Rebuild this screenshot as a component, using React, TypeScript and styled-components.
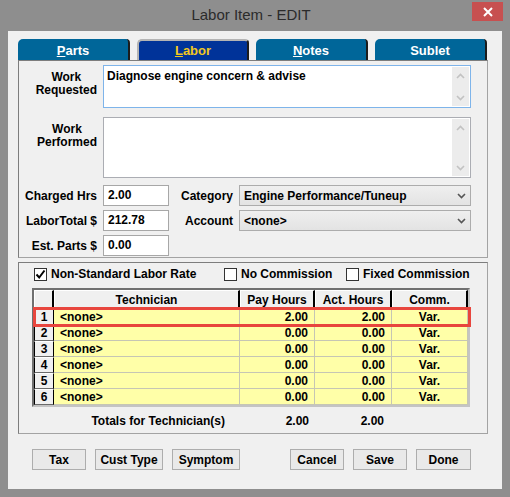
import React from 'react';
import styled, {createGlobalStyle} from 'styled-components';

const GlobalStyle = createGlobalStyle`
  body {
    margin: 0;
    font-family: "Liberation Sans", Arial, sans-serif;
  }
  * { box-sizing: border-box; }
`;

const Window = styled.div`
  width: 510px;
  height: 497px;
  background: #8e8e8e;
  display: flex;
  flex-direction: column;
  padding: 0 8px 8px 8px;
`;

const TitleBar = styled.div`
  height: 31px;
  display: flex;
  align-items: flex-start;
  margin-right: -1px;
`;

const Title = styled.div`
  flex: 1;
  height: 30px;
  line-height: 30px;
  text-align: center;
  padding-left: 22px;
  font-size: 15px;
  color: #2b2b2b;
`;

const CloseButton = styled.div`
  width: 31px;
  height: 19px;
  margin-top: 2px;
  background: #c75050;
  display: flex;
  align-items: center;
  justify-content: center;
`;

const Client = styled.div`
  flex: 1;
  background: #f0f0f0;
  padding: 8px 0 0 10px;
`;

const TabStrip = styled.div`
  display: flex;
  gap: 7px;
  height: 21px;
`;

const Tab = styled.div<{ $active?: boolean }>`
  width: 112px;
  height: 21px;
  background: ${p => (p.$active ? '#003399' : '#006699')};
  color: ${p => (p.$active ? '#f2c81e' : '#ffffff')};
  font-weight: bold;
  font-size: 13px;
  display: flex;
  align-items: center;
  justify-content: center;
  border-radius: 5px 4px 0 0;
  border-right: 2px solid #1c1c1c;
  border-top: ${p => (p.$active ? '2px solid #b4b4b4' : '0')};
  border-left: ${p => (p.$active ? '2px solid #b4b4b4' : '0')};
  padding-top: ${p => (p.$active ? '0' : '1px')};

  u { text-decoration: underline; text-underline-offset: 1px; }
`;

const Panel = styled.div<{ $height: number }>`
  width: 470px;
  height: ${p => p.$height}px;
  border: 1px solid;
  border-color: #7d7d7d #a3a3a3 #a3a3a3 #7d7d7d;
`;

const MainPanel = styled(Panel)`
  padding-top: 4px;
`;

const TechPanel = styled(Panel)`
  margin-top: 4px;
  padding-top: 4px;
`;

const MemoRow = styled.div<{ $gap?: number }>`
  display: flex;
  gap: 6px;
  margin-top: ${p => p.$gap || 0}px;
`;

const MemoLabel = styled.div`
  width: 78px;
  display: flex;
  justify-content: flex-end;
  padding-top: 6px;
  font-size: 12px;
  font-weight: bold;
  line-height: 13px;
  text-align: center;
`;

const Memo = styled.div<{ $height: number; $focused?: boolean }>`
  width: 368px;
  height: ${p => p.$height}px;
  background: #fff;
  border: 1px solid ${p => (p.$focused ? '#7eb4ea' : '#abadb3')};
  display: flex;
`;

const MemoText = styled.div`
  flex: 1;
  padding: 3px 3px;
  font-size: 12px;
  font-weight: bold;
  line-height: 14px;
`;

const ScrollBar = styled.div`
  width: 17px;
  margin: 1px 1px 1px 0;
  background: #ececec;
  display: flex;
  flex-direction: column;
  justify-content: space-between;
`;

const ScrollArrow = styled.div`
  height: 17px;
  display: flex;
  align-items: center;
  justify-content: center;
`;

const FieldGrid = styled.div`
  display: grid;
  grid-template-columns: 78px 66px 58px 232px;
  grid-auto-rows: 21px;
  column-gap: 6px;
  row-gap: 4px;
  margin-top: 7px;
  align-items: center;
`;

const FieldLabel = styled.div`
  text-align: right;
  font-size: 12px;
  font-weight: bold;
  white-space: nowrap;
`;

const TextBox = styled.div`
  height: 21px;
  background: #fff;
  border: 1px solid #a7a7a7;
  padding-left: 4px;
  font-size: 12px;
  font-weight: bold;
  line-height: 19px;
`;

const Select = styled.div`
  height: 21px;
  background: linear-gradient(#efefef, #e3e3e3);
  border: 1px solid #acacac;
  padding: 0 4px 0 4px;
  display: flex;
  align-items: center;
  justify-content: space-between;
  font-size: 12px;
  font-weight: bold;
`;

const CheckRow = styled.div`
  display: grid;
  grid-template-columns: 190px 122px auto;
  margin-left: 15px;
  height: 14px;
  align-items: center;
`;

const CheckItem = styled.label`
  display: flex;
  align-items: center;
  gap: 4px;
  font-size: 12px;
  font-weight: bold;
  white-space: nowrap;
`;

const CheckBox = styled.span`
  width: 13px;
  height: 13px;
  background: #fff;
  border: 1px solid #333;
  display: flex;
  align-items: center;
  justify-content: center;
`;

const GridWrap = styled.div`
  position: relative;
  margin: 7px 0 0 13px;
  width: 438px;
`;

const GridBox = styled.div`
  border: 2px solid;
  border-color: #707070 #c4c4c4 #c4c4c4 #707070;
  display: grid;
  grid-template-columns: 20px 186px 75px 77px 76px;
  grid-template-rows: 19px repeat(6, 16px);
  background: #f0f0f0;
`;

const HeadCell = styled.div`
  border-top: 1px solid #fff;
  border-left: 1px solid #fff;
  border-right: 2px solid #000;
  border-bottom: 1px solid #9a9a9a;
  display: flex;
  align-items: center;
  justify-content: center;
  font-size: 12px;
  font-weight: bold;
`;

const RowNum = styled.div`
  background: #f0f0f0;
  border-top: 1px solid #fff;
  border-left: 1px solid #000;
  border-right: 1px solid #000;
  border-bottom: 1px solid #6a6a6a;
  display: flex;
  align-items: center;
  justify-content: center;
  font-size: 12px;
  font-weight: bold;
`;

const Cell = styled.div<{ $align?: 'left' | 'right' | 'center' }>`
  background: #ffffa8;
  border-right: 1px solid #c6c6b4;
  border-bottom: 1px solid #c6c6b4;
  display: flex;
  align-items: center;
  justify-content: ${p => (p.$align === 'right' ? 'flex-end' : p.$align === 'center' ? 'center' : 'flex-start')};
  padding: 0 6px;
  font-size: 12px;
  font-weight: bold;
  line-height: 1;
`;

const Highlight = styled.div`
  position: absolute;
  left: 1px;
  top: 19px;
  width: 438px;
  height: 20px;
  border: 3px solid #e8463e;
  pointer-events: none;
`;

const TotalsRow = styled.div`
  display: grid;
  grid-template-columns: 20px 186px 75px 77px 76px;
  margin: 4px 0 0 15px;
  height: 20px;
  align-items: center;
  font-size: 12px;
  font-weight: bold;
`;

const TotalLabel = styled.div`
  grid-column: 2;
  text-align: right;
  padding-right: 15px;
`;

const TotalValue = styled.div<{ $pad: number }>`
  text-align: right;
  padding-right: ${p => p.$pad}px;
`;

const ButtonRow = styled.div`
  margin: 15px 0 0 14px;
  width: 439px;
  display: flex;
  justify-content: space-between;
`;

const ButtonGroup = styled.div`
  display: flex;
  gap: 9px;
`;

const Button = styled.button<{ $width: number }>`
  width: ${p => p.$width}px;
  height: 21px;
  padding: 0;
  background: #e9e9e9;
  border: 1px solid #adadad;
  font-family: "Liberation Sans", Arial, sans-serif;
  font-size: 12px;
  font-weight: bold;
  color: #000;
`;

const Chevron = ({up, color = '#c2c2c2'}: { up?: boolean; color?: string }) => (
  <svg width="9" height="6" viewBox="0 0 9 6">
    <polyline
      points={up ? '1,5 4.5,1.5 8,5' : '1,1 4.5,4.5 8,1'}
      fill="none"
      stroke={color}
      strokeWidth="1.6"
    />
  </svg>
);

const rows = [
  {pay: '2.00', act: '2.00'},
  {pay: '0.00', act: '0.00'},
  {pay: '0.00', act: '0.00'},
  {pay: '0.00', act: '0.00'},
  {pay: '0.00', act: '0.00'},
  {pay: '0.00', act: '0.00'},
];

function MemoBox({height, focused, text}: { height: number; focused?: boolean; text?: string }) {
  return (
    <Memo $height={height} $focused={focused}>
      <MemoText>{text}</MemoText>
      <ScrollBar>
        <ScrollArrow><Chevron up/></ScrollArrow>
        <ScrollArrow><Chevron/></ScrollArrow>
      </ScrollBar>
    </Memo>
  );
}

function App() {
  return (
    <Window>
      <GlobalStyle/>
      <TitleBar>
        <Title>Labor Item - EDIT</Title>
        <CloseButton>
          <svg width="10" height="10" viewBox="0 0 10 10">
            <path d="M1 1 L9 9 M9 1 L1 9" stroke="#fff" strokeWidth="2"/>
          </svg>
        </CloseButton>
      </TitleBar>
      <Client>
        <TabStrip>
          <Tab><span><u>P</u>arts</span></Tab>
          <Tab $active><span><u>L</u>abor</span></Tab>
          <Tab><span><u>N</u>otes</span></Tab>
          <Tab><span>Sublet</span></Tab>
        </TabStrip>
        <MainPanel $height={198}>
          <MemoRow>
            <MemoLabel><span>Work<br/>Requested</span></MemoLabel>
            <MemoBox height={43} focused text="Diagnose engine concern & advise"/>
          </MemoRow>
          <MemoRow $gap={9}>
            <MemoLabel><span>Work<br/>Performed</span></MemoLabel>
            <MemoBox height={61}/>
          </MemoRow>
          <FieldGrid>
            <FieldLabel>Charged Hrs</FieldLabel>
            <TextBox>2.00</TextBox>
            <FieldLabel>Category</FieldLabel>
            <Select>
              <span>Engine Performance/Tuneup</span>
              <Chevron color="#555"/>
            </Select>
            <FieldLabel>LaborTotal $</FieldLabel>
            <TextBox>212.78</TextBox>
            <FieldLabel>Account</FieldLabel>
            <Select>
              <span>&lt;none&gt;</span>
              <Chevron color="#555"/>
            </Select>
            <FieldLabel>Est. Parts $</FieldLabel>
            <TextBox>0.00</TextBox>
          </FieldGrid>
        </MainPanel>
        <TechPanel $height={172}>
          <CheckRow>
            <CheckItem>
              <CheckBox>
                <svg width="11" height="11" viewBox="0 0 11 11">
                  <polyline points="1.5,5.5 4.2,8.5 9.5,1.5" fill="none" stroke="#000" strokeWidth="2"/>
                </svg>
              </CheckBox>
              Non-Standard Labor Rate
            </CheckItem>
            <CheckItem><CheckBox/>No Commission</CheckItem>
            <CheckItem><CheckBox/>Fixed Commission</CheckItem>
          </CheckRow>
          <GridWrap>
            <GridBox>
              <HeadCell/>
              <HeadCell>Technician</HeadCell>
              <HeadCell>Pay Hours</HeadCell>
              <HeadCell>Act. Hours</HeadCell>
              <HeadCell>Comm.</HeadCell>
              {rows.map((r, i) => (
                <React.Fragment key={i}>
                  <RowNum>{i + 1}</RowNum>
                  <Cell>&lt;none&gt;</Cell>
                  <Cell $align="right">{r.pay}</Cell>
                  <Cell $align="right">{r.act}</Cell>
                  <Cell $align="center">Var.</Cell>
                </React.Fragment>
              ))}
            </GridBox>
            <Highlight/>
          </GridWrap>
          <TotalsRow>
            <TotalLabel>Totals for Technician(s)</TotalLabel>
            <TotalValue $pad={6}>2.00</TotalValue>
            <TotalValue $pad={8}>2.00</TotalValue>
          </TotalsRow>
        </TechPanel>
        <ButtonRow>
          <ButtonGroup>
            <Button $width={54}>Tax</Button>
            <Button $width={68}>Cust Type</Button>
            <Button $width={68}>Symptom</Button>
          </ButtonGroup>
          <ButtonGroup>
            <Button $width={54}>Cancel</Button>
            <Button $width={54}>Save</Button>
            <Button $width={55}>Done</Button>
          </ButtonGroup>
        </ButtonRow>
      </Client>
    </Window>
  );
}

export default App;
